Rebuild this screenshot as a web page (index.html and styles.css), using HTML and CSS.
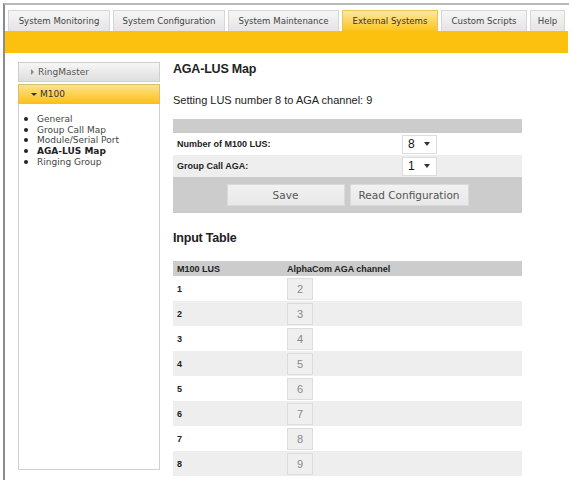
FILE: index.html
```html
<!DOCTYPE html>
<html lang="en">
  <head>
    <meta charset="UTF-8" />
    <title>External Systems - M100</title>
    <link rel="stylesheet" href="styles.css">
  </head>

  <body>
    <div class="frame">
      <ul class="tabs">
        <li class="t-mon">System Monitoring</li>
        <li class="t-conf">System Configuration</li>
        <li class="t-maint">System Maintenance</li>
        <li class="t-ext active">External Systems</li>
        <li class="t-scr">Custom Scripts</li>
        <li class="t-help">Help</li>
      </ul>
      <div class="bar"></div>

      <div class="page">
        <div class="side">
          <div class="side-head"><span class="tri-right"></span>RingMaster</div>
          <div class="side-head open"><span class="tri-down"></span>M100</div>
          <ul class="side-menu">
            <li>General</li>
            <li>Group Call Map</li>
            <li>Module/Serial Port</li>
            <li class="current">AGA-LUS Map</li>
            <li>Ringing Group</li>
          </ul>
        </div>

        <div class="main">
          <h1>AGA-LUS Map</h1>
          <p class="status">Setting LUS number 8 to AGA channel: 9</p>

          <table class="config">
            <tr class="head"><td colspan="2"></td></tr>
            <tr>
              <td class="label">Number of M100 LUS:</td>
              <td><div class="sel"><span>8</span><i class="caret"></i></div></td>
            </tr>
            <tr class="alt">
              <td class="label">Group Call AGA:</td>
              <td><div class="sel"><span>1</span><i class="caret"></i></div></td>
            </tr>
            <tr class="actions">
              <td colspan="2">
                <div class="btns">
                  <button>Save</button>
                  <button>Read Configuration</button>
                </div>
              </td>
            </tr>
          </table>

          <h2>Input Table</h2>

          <table class="inputs">
            <tr class="head">
              <td class="c1">M100 LUS</td>
              <td>AlphaCom AGA channel</td>
            </tr>
            <tr><td class="c1">1</td><td><span class="box">2</span></td></tr>
            <tr class="alt"><td class="c1">2</td><td><span class="box">3</span></td></tr>
            <tr><td class="c1">3</td><td><span class="box">4</span></td></tr>
            <tr class="alt"><td class="c1">4</td><td><span class="box">5</span></td></tr>
            <tr><td class="c1">5</td><td><span class="box">6</span></td></tr>
            <tr class="alt"><td class="c1">6</td><td><span class="box">7</span></td></tr>
            <tr><td class="c1">7</td><td><span class="box">8</span></td></tr>
            <tr class="alt"><td class="c1">8</td><td><span class="box">9</span></td></tr>
          </table>
        </div>
      </div>
    </div>
  </body>
</html>
```

FILE: styles.css
```css
* {
  margin: 0;
  padding: 0;
  box-sizing: border-box;
}

body {
  background: #fff;
  font-family: "DejaVu Sans", Verdana, sans-serif;
  color: #333;
}

.frame {
  width: 566px;
  height: 477px;
  margin: 3px 0 0 3px;
  border-top: 2px solid #b8b8b8;
  border-left: 2px solid #8c8c8c;
}

/* top tabs */
.tabs {
  display: flex;
  gap: 3px;
  list-style: none;
  padding: 5px 0 0 3px;
}

.tabs li {
  height: 21px;
  border: 1px solid #d6d6d6;
  border-bottom: none;
  background: linear-gradient(#f6f6f6, #e4e4e4);
  font-size: 8.6px;
  line-height: 20px;
  text-align: center;
  color: #444;
  white-space: nowrap;
}

.tabs .t-mon { width: 102px; }
.tabs .t-conf { width: 112px; }
.tabs .t-maint { width: 111px; }
.tabs .t-ext { width: 96px; }
.tabs .t-scr { width: 86px; }
.tabs .t-help { width: 35px; }

.tabs li.active {
  border-color: #eac35a;
  background: linear-gradient(#fde7a6, #fcc41a);
  color: #333;
}

.bar {
  height: 22px;
  margin-right: 1px;
  background-color: #fcc10f;
}

.page {
  display: flex;
  padding: 9px 0 0 13px;
}

/* left menu */
.side {
  width: 142px;
}

.side-head {
  display: flex;
  align-items: center;
  height: 20px;
  padding-left: 12px;
  border: 1px solid #cfcfcf;
  background: linear-gradient(#f6f6f6, #dedede);
  font-size: 9px;
  color: #555;
}

.side-head.open {
  margin-top: 2px;
  border-color: #d8bf70;
  background: linear-gradient(#fde28e, #fcc218);
  color: #333;
}

.tri-right {
  width: 0;
  height: 0;
  margin-right: 4px;
  border-left: 3px solid #888;
  border-top: 3px solid transparent;
  border-bottom: 3px solid transparent;
}

.tri-down {
  width: 0;
  height: 0;
  margin-right: 3px;
  border-top: 3px solid #333;
  border-left: 3px solid transparent;
  border-right: 3px solid transparent;
}

.side-menu {
  height: 366px;
  padding: 10px 0 0 5px;
  border: 1px solid #d0d0d0;
  border-top: none;
  list-style: none;
  font-size: 9px;
  line-height: 10.7px;
  color: #444;
}

.side-menu li::before {
  content: "";
  display: inline-block;
  width: 4px;
  height: 4px;
  margin: 0 9px 1px 0;
  border-radius: 50%;
  background-color: #222;
  vertical-align: middle;
}

.side-menu li.current {
  font-weight: bold;
  color: #222;
}

/* main column */
.main {
  width: 349px;
  margin-left: 13px;
  font-family: "Liberation Sans", Arial, sans-serif;
}

.main h1,
.main h2 {
  font-size: 12.5px;
  line-height: 14px;
  color: #222;
  letter-spacing: -0.2px;
}

.status {
  margin-top: 18px;
  font-size: 11px;
  line-height: 13px;
  color: #222;
}

.config,
.inputs {
  width: 349px;
  border-collapse: collapse;
}

.config {
  margin-top: 12px;
}

.config .head td {
  height: 14px;
  background-color: #cccccc;
}

.config td {
  height: 22px;
  padding: 0;
}

.config td.label {
  width: 229px;
  padding-left: 4px;
  font-size: 9px;
  font-weight: bold;
  color: #222;
}

.config tr.alt td,
.inputs tr.alt td {
  background-color: #eeeeee;
}

.sel {
  display: flex;
  align-items: center;
  justify-content: space-between;
  width: 35px;
  height: 19px;
  padding: 0 6px 0 5px;
  border: 1px solid #dcdcdc;
  background: #fff;
  font-size: 12px;
  color: #111;
}

.caret {
  width: 0;
  height: 0;
  border-top: 4px solid #333;
  border-left: 3px solid transparent;
  border-right: 3px solid transparent;
}

.config .actions td {
  height: 36px;
  background-color: #cccccc;
}

.btns {
  display: flex;
  justify-content: center;
  gap: 5px;
}

.btns button {
  width: 118px;
  height: 22px;
  border: 1px solid #dadada;
  background: linear-gradient(#f2f2f2, #e8e8e8);
  font-family: "DejaVu Sans", Verdana, sans-serif;
  font-size: 10.5px;
  color: #555;
}

.btns button + button {
  width: 119px;
}

.main h2 {
  margin-top: 18px;
}

.inputs {
  margin-top: 16px;
}

.inputs td {
  height: 25px;
  padding: 0;
  font-size: 9px;
  font-weight: bold;
  color: #222;
}

.inputs .head td {
  height: 15px;
  background-color: #cccccc;
}

.inputs td.c1 {
  width: 114px;
  padding-left: 4px;
}

.box {
  display: block;
  width: 26px;
  height: 22px;
  margin-top: 1px;
  border: 1px solid #dcdcdc;
  background-color: #efefef;
  text-align: center;
  font-size: 11px;
  font-weight: normal;
  line-height: 20px;
  color: #888;
}
```
